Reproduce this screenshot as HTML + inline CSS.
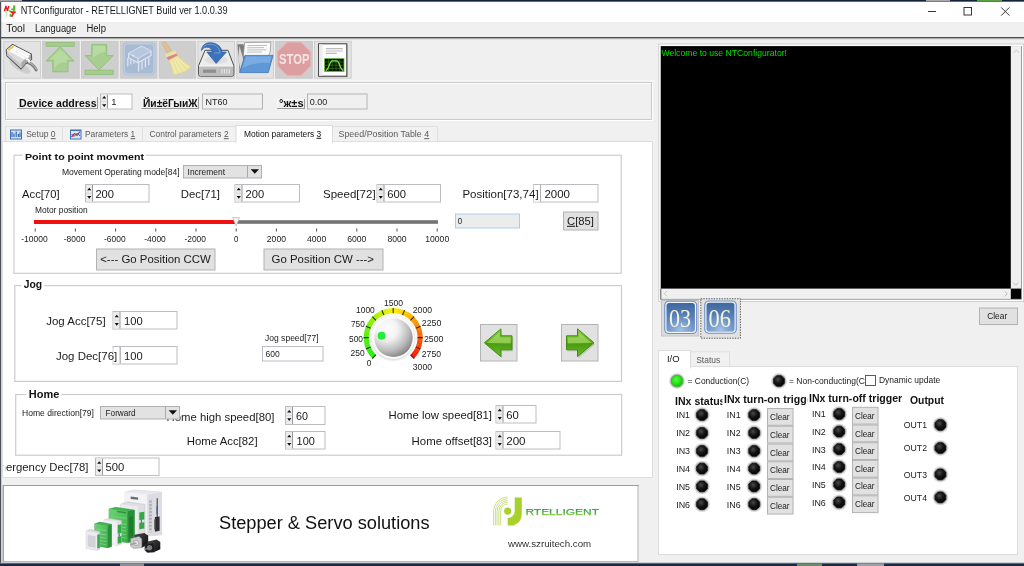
<!DOCTYPE html>
<html lang="en"><head><meta charset="utf-8"><title>NTConfigurator - RETELLIGNET Build ver 1.0.0.39</title>
<style>
html,body{margin:0;padding:0;background:#f0f0f0;overflow:hidden}
body{width:1024px;height:566px;position:relative;font-family:'Liberation Sans', sans-serif}
svg{position:absolute;left:-4px;top:-4px;display:block;filter:blur(0.35px)}
text{font-family:'Liberation Sans', sans-serif;white-space:pre}
</style></head><body>
<svg width="1032" height="574" viewBox="-4 -4 1032 574">
<defs>
<linearGradient id="gBlue" x1="0" y1="0" x2="0" y2="1"><stop offset="0" stop-color="#3f689f"/><stop offset="0.6" stop-color="#5f86bd"/><stop offset="1" stop-color="#6f95c8"/></linearGradient>
<radialGradient id="gBlue2" cx="0.5" cy="0.95" r="0.6"><stop offset="0" stop-color="#a4c4ea" stop-opacity="0.95"/><stop offset="1" stop-color="#86aad8" stop-opacity="0"/></radialGradient>
<radialGradient id="gKnob" cx="0.34" cy="0.28" r="0.9"><stop offset="0" stop-color="#ffffff"/><stop offset="0.3" stop-color="#f3f3f3"/><stop offset="0.62" stop-color="#bcbcbc"/><stop offset="0.85" stop-color="#858585"/><stop offset="1" stop-color="#5c5c5c"/></radialGradient>
<radialGradient id="gLed" cx="0.4" cy="0.35" r="0.7"><stop offset="0" stop-color="#4a4a4a"/><stop offset="0.5" stop-color="#161616"/><stop offset="1" stop-color="#000000"/></radialGradient>
<radialGradient id="gLedG" cx="0.42" cy="0.36" r="0.7"><stop offset="0" stop-color="#5cf548"/><stop offset="0.55" stop-color="#22e812"/><stop offset="1" stop-color="#14b80c"/></radialGradient>
<linearGradient id="gArrow" x1="0" y1="0" x2="0" y2="1"><stop offset="0" stop-color="#8fd04a"/><stop offset="0.5" stop-color="#5fb01c"/><stop offset="0.52" stop-color="#4a9a10"/><stop offset="1" stop-color="#6cbc2a"/></linearGradient>
<clipPath id="cpPage"><rect x="3.2" y="142" width="648.8" height="335"/></clipPath>
<clipPath id="cpIO"><rect x="660" y="367" width="356" height="187"/></clipPath>
<linearGradient id="gW" x1="0" y1="0" x2="1" y2="0"><stop offset="0" stop-color="#f4f4f6"/><stop offset="1" stop-color="#d8d8dc"/></linearGradient>
<linearGradient id="gG" x1="0" y1="0" x2="1" y2="1"><stop offset="0" stop-color="#6ed078"/><stop offset="1" stop-color="#3aae48"/></linearGradient>
<linearGradient id="gRt" x1="0" y1="0" x2="0" y2="1"><stop offset="0" stop-color="#169a52"/><stop offset="0.55" stop-color="#3fae3c"/><stop offset="1" stop-color="#a4d42a"/></linearGradient>
<linearGradient id="gMot" x1="0" y1="0" x2="1" y2="1"><stop offset="0" stop-color="#4a4a4a"/><stop offset="1" stop-color="#0c0c0c"/></linearGradient>
<clipPath id="cpS1"><rect x="660" y="390" width="62.4" height="20"/></clipPath><clipPath id="cpS2"><rect x="722.6" y="390" width="84.6" height="20"/></clipPath></defs>
<rect x="-4" y="-4" width="1032" height="574" fill="#f0f0f0" />
<rect x="-4" y="-4" width="1032" height="6" fill="#7e8796" />
<rect x="-4" y="-4" width="1032" height="5.3" fill="#14233f" />
<rect x="-4" y="-4" width="26" height="5.4" fill="#a8a8a8" />
<rect x="926" y="-4" width="24" height="5.4" fill="#a8a8a8" />
<rect x="977" y="-4" width="25" height="5.4" fill="#5aa040" />
<rect x="1" y="2" width="1027" height="20" fill="#ffffff" />
<rect x="-4" y="2" width="5.2" height="561" fill="#4a4f58" />
<rect x="-4" y="562.6" width="1032" height="1" fill="#9aa0a8" />
<rect x="-4" y="563.4" width="1032" height="6.6" fill="#1a2a44" />
<rect x="120" y="563.4" width="24" height="6.6" fill="#8a8f98" />
<rect x="797" y="563.4" width="25" height="6.6" fill="#6a8a6a" />
<rect x="857" y="563.4" width="27" height="6.6" fill="#9aa0a8" />
<g stroke-linecap="butt" fill="none"><path d="M4.4 11.2 L5.9 6.3 L7.4 10.6 L8.8 6" stroke="#f01818" stroke-width="1.5" stroke-linejoin="round"/><path d="M6.5 11.6 L6.5 16.6" stroke="#bfe3a8" stroke-width="1.3"/><path d="M14.2 5.5 L14.2 10.8" stroke="#52b81e" stroke-width="2.2"/><path d="M11.2 9.4 L14 9.4" stroke="#52b81e" stroke-width="1.7"/><path d="M8.4 10.4 L11.8 12" stroke="#6cc43a" stroke-width="1.6"/><path d="M10.6 12.2 L15.7 12.2" stroke="#f01818" stroke-width="1.9"/><path d="M13.6 12.6 L11.6 16.8" stroke="#f01818" stroke-width="1.8"/><path d="M10.6 14 L10.2 16.6" stroke="#52b81e" stroke-width="1.6"/></g>
<text x="20.7" y="14.2" font-size="10" fill="#1a1a1a" textLength="206.8" lengthAdjust="spacingAndGlyphs">NTConfigurator - RETELLIGNET Build ver 1.0.0.39</text>
<line x1="928" y1="11.5" x2="936" y2="11.5" stroke="#222" stroke-width="0.9"/>
<rect x="964" y="7.5" width="7.5" height="7.5" fill="none" stroke="#222" stroke-width="0.9" />
<path d="M1001.2 7.4 L1009.4 15.6 M1009.4 7.4 L1001.2 15.6" stroke="#222" stroke-width="0.9" fill="none"/>
<text x="6.3" y="32" font-size="10" fill="#1a1a1a" textLength="18.7" lengthAdjust="spacingAndGlyphs">Tool</text>
<text x="35" y="32" font-size="10" fill="#1a1a1a" textLength="41.5" lengthAdjust="spacingAndGlyphs">Language</text>
<text x="86.5" y="32" font-size="10" fill="#1a1a1a" textLength="19.5" lengthAdjust="spacingAndGlyphs">Help</text>
<rect x="1" y="37" width="1027" height="1.6" fill="#4d4d4d" />
<rect x="1" y="38.6" width="1027" height="1" fill="#d8d8d8" />
<rect x="3.7" y="41.3" width="36.7" height="36.9" fill="#e3e3e3" stroke="#c8c8c8" stroke-width="0.8" />
<rect x="42.55" y="41.3" width="36.7" height="36.9" fill="#cecece" stroke="#c6c6c6" stroke-width="0.8" />
<rect x="81.4" y="41.3" width="36.7" height="36.9" fill="#cecece" stroke="#c6c6c6" stroke-width="0.8" />
<rect x="120.25" y="41.3" width="36.7" height="36.9" fill="#cecece" stroke="#c6c6c6" stroke-width="0.8" />
<rect x="159.1" y="41.3" width="36.7" height="36.9" fill="#cecece" stroke="#c6c6c6" stroke-width="0.8" />
<rect x="197.95" y="41.3" width="36.7" height="36.9" fill="#e3e3e3" stroke="#c8c8c8" stroke-width="0.8" />
<rect x="236.8" y="41.3" width="36.7" height="36.9" fill="#e3e3e3" stroke="#c8c8c8" stroke-width="0.8" />
<rect x="275.65" y="41.3" width="36.7" height="36.9" fill="#cecece" stroke="#c6c6c6" stroke-width="0.8" />
<rect x="314.5" y="41.3" width="36.7" height="36.9" fill="#e3e3e3" stroke="#c8c8c8" stroke-width="0.8" />
<g><ellipse cx="20" cy="66.5" rx="12" ry="4.2" fill="#bdbdbd" opacity="0.55" transform="rotate(32 20 66.5)"/><path d="M25.5 62 C30 62.6 34 65.6 36.2 70" stroke="#7e7e7e" stroke-width="3" fill="none" stroke-linecap="round"/><path d="M25.5 61.6 C30 62.2 34 65 36.4 69.4" stroke="#c4c4c4" stroke-width="1" fill="none" stroke-linecap="round"/><path d="M6.2 49.9 L12.6 44.4 L31.3 54.1 L31.7 59.4 L25.3 64 L21.1 69 L6.9 55.9 Z" fill="#dcdcdc" stroke="#565656" stroke-width="1.1" stroke-linejoin="round"/><path d="M6.6 50 L12.7 44.9 L30.9 54.3 L24.6 59.6 Z" fill="#fbfbfb"/><path d="M24.6 59.6 L30.9 54.3 L31.2 59.2 L25 63.8 L21.4 68.2 L21.2 62.8 Z" fill="#a9a9a9"/><path d="M6.8 50.6 L21.2 62.8 L21.2 68.2 L7.3 55.6 Z" fill="#c8c8c8"/><path d="M7.4 51.8 L20.6 63.2" stroke="#efefef" stroke-width="0.9"/><path d="M15.6 51.6 L27.4 58.2 L29.6 56.4 L17.8 50 Z" fill="#ffffff" stroke="#d4d4d4" stroke-width="0.5"/><path d="M26.2 58.6 L29 60.2 L29 62.6" stroke="#ffffff" stroke-width="1.8" fill="none"/><path d="M8.4 50.2 L9.9 49 M10.2 48.8 L11.7 47.6 M12 47.4 L13.5 46.2" stroke="#ffbe1e" stroke-width="1.9"/></g>
<g fill="#a7ce90" stroke="#90c078" stroke-width="0.9" stroke-linejoin="round"><rect x="46" y="42.6" width="28.3" height="3.7"/><path d="M60.1 46.6 L74.1 61 L68 61 L68 71.8 L52.8 71.8 L52.8 61 L46 61 Z"/></g>
<path d="M60.1 49 L70.5 59.6 L66.6 59.6 L66.6 63 C60 61 56 64 54.2 70.4 L54.2 59.6 L49.6 59.6 Z" fill="#bcdda6" opacity="0.75"/>
<g fill="#a7ce90" stroke="#90c078" stroke-width="0.9" stroke-linejoin="round"><rect x="85" y="70.2" width="28.2" height="4.3"/><path d="M91.7 44.4 L106.7 44.4 L106.7 55.6 L113.1 55.6 L99.1 70 L85 55.6 L91.7 55.6 Z"/></g>
<path d="M93 45.8 L105.4 45.8 L105.4 52 C100 52.5 95.4 55 93 59 Z" fill="#bcdda6" opacity="0.75"/>
<rect x="122.8" y="42.5" width="32.5" height="32.8" rx="4.2" fill="#a9bbd4"/><rect x="124.1" y="43.8" width="29.9" height="30.2" rx="3.3" fill="none" stroke="#c9d6e8" stroke-width="1"/><g stroke="#dfe7f2" stroke-width="1.2" fill="none" stroke-linejoin="round"><path d="M128.6 53.4 L141.6 46.2 L151 51 L151 55.4 L138 62.8 L128.6 58 Z"/><path d="M128.6 53.4 L138 58.2 L151 51 M138 58.2 L138 62.8"/><path d="M127.8 58 L127.8 66.4 M130.8 59.6 L130.8 64.6 M134 61.2 L134 63.6 M138.6 63 L138.6 71.6 M142 61 L142 69.4 M145.4 59.2 L145.4 67.2 M148.8 57.2 L148.8 65"/></g><path d="M128.6 53.4 L141.6 46.2 L151 51 L138 58.2 Z" fill="#bccbe0" opacity="0.8"/><circle cx="133.4" cy="55.6" r="0.9" fill="#e6edf6"/>
<g><path d="M161.9 43 Q162.6 41.6 165.6 42 L171.4 50.4 L166.8 52.6 Z" fill="#dfc094" stroke="#cfae82" stroke-width="0.6"/><path d="M168.4 60 L177.4 55.4 C181 60 187 64 191.2 66.5 C188 71 181 74 173.2 74.8 C172.4 69 170.4 64 168.4 60 Z" fill="#ebe29e" stroke="#dcd28a" stroke-width="0.6"/><path d="M171.2 61 L176.4 73.8 M173.6 59.8 L180.6 72.6 M175.8 58.8 L184.8 70.4 M177 57.6 L188.4 68" stroke="#f5efbe" stroke-width="0.9" fill="none"/><path d="M164.7 54.5 L175 50.2 L176.7 53.4 L166.8 57.3 Z" fill="#ebe29e"/><path d="M166.8 57.3 L176.7 53.4 L177.5 55.6 L168.2 60.2 Z" fill="#de8686"/></g>
<g><path d="M205 50.3 L228 50.3 L233.8 65.6 L233.8 74.4 Q233.8 76.2 232 76.2 L200.4 76.2 Q198.6 76.2 198.6 74.4 L198.6 65.6 Z" fill="#ececec" stroke="#4c4c4c" stroke-width="1" stroke-linejoin="round"/><path d="M199.2 66 L233.2 66 L233.2 74.2 Q233.2 75.6 231.8 75.6 L200.6 75.6 Q199.2 75.6 199.2 74.2 Z" fill="#bdbdbd"/><path d="M199.2 66 L233.2 66" stroke="#f8f8f8" stroke-width="1"/><rect x="203" y="69.6" width="13" height="3.2" fill="#8e8e8e"/><path d="M222 69 L222 73.6 M224.4 69 L224.4 73.6 M226.8 69 L226.8 73.6 M229.2 69 L229.2 73.6" stroke="#e6e6e6" stroke-width="1"/><ellipse cx="216.2" cy="60" rx="11.5" ry="3.8" fill="#dedede"/><path d="M201.4 50.6 C201.6 44.6 207 42 212 42.8 C218.4 43.8 221.6 47.6 221.8 52 L226.4 52 L216.2 63.4 L206.8 52 L212.2 52 C212 48.8 209.6 47 206.6 47.2 C204 47.4 202.4 48.8 201.4 50.6 Z" fill="#3c73bd" stroke="#2c5c9e" stroke-width="0.7" stroke-linejoin="round"/><path d="M203 47.6 C205 44.6 209.6 43.6 213.4 44.6 C216.6 45.6 219.4 48 220 52.8 L214 53" fill="none" stroke="#7fa8de" stroke-width="1" opacity="0.8"/></g>
<g><path d="M237.4 44.2 L243.4 44.2 L244.4 46 L246 72 L239.6 72 Z" fill="#7c7c7c"/><path d="M239.4 46 L243.6 60 L240.6 71 L238.2 58 Z" fill="#d9d9d9"/><path d="M244.6 42.6 L270.8 42.2 L270.2 52 L268.4 56.4 L243.4 56.4 Z" fill="#fbfbfb" stroke="#8a8a8a" stroke-width="0.7"/><path d="M247.6 45.6 L267 45.4 M247.4 47.8 L264 47.6 M247.2 50 L266.4 49.8 M247 52.2 L262 52" stroke="#b5b5b5" stroke-width="0.9"/><path d="M244.9 55.4 L273 55.4 L268.3 72.6 L239.6 72.6 Z" fill="#5e98d8" stroke="#3f74b6" stroke-width="0.8" stroke-linejoin="round"/><path d="M245.8 56.6 L271.4 56.6 L269.6 63 C260 62 250 64 242.4 68 Z" fill="#86b4e6" opacity="0.7"/></g>
<polygon points="311.01,65.90 301.10,75.81 287.10,75.81 277.19,65.90 277.19,51.90 287.10,41.99 301.10,41.99 311.01,51.90" fill="#dc9ea0" stroke="#e6baba" stroke-width="1.2"/>
<text x="279" y="64.4" font-size="15.4" font-weight="bold" fill="#f3e4e4" textLength="30.4" lengthAdjust="spacingAndGlyphs">STOP</text>
<g><rect x="319.6" y="44.8" width="28.2" height="32.4" fill="#bcbcbc"/><rect x="318.6" y="43.8" width="28.2" height="32.4" fill="#fdfdfd" stroke="#3c3c3c" stroke-width="1"/><rect x="319.2" y="44.4" width="3.4" height="31.2" fill="#ececec"/><path d="M325.8 48.6 L342.8 48.6 M325.8 51 L342.8 51 M325.8 53.4 L336.8 53.4" stroke="#bdbdbd" stroke-width="1.1"/><rect x="324.6" y="58.6" width="19.4" height="12.8" fill="#060c02" stroke="#6ab83a" stroke-width="0.8"/><path d="M324.6 62 L344 62 M324.6 65.2 L344 65.2 M324.6 68.4 L344 68.4 M328.4 58.6 L328.4 71.4 M332.2 58.6 L332.2 71.4 M336 58.6 L336 71.4 M339.8 58.6 L339.8 71.4" stroke="#2f8212" stroke-width="0.7"/><path d="M325.6 70.4 C329 70 329.6 61 332 60.8 L337 60.8 C339.4 61 340 70 343.4 70.4" stroke="#8be04c" stroke-width="1.2" fill="none"/></g>
<rect x="1" y="80.4" width="654" height="1" fill="#fbfbfb" />
<rect x="6.5" y="83.5" width="646" height="37" fill="none" stroke="#ffffff" stroke-width="1" />
<rect x="5.5" y="82.5" width="646" height="37" fill="none" stroke="#c9c9c9" stroke-width="1" />
<rect x="17" y="97" width="81" height="12" fill="#f0f0f0" />
<line x1="17" y1="97.5" x2="98" y2="97.5" stroke="#fafafa" stroke-width="1"/>
<line x1="17.5" y1="97" x2="17.5" y2="109" stroke="#fafafa" stroke-width="1"/>
<line x1="17" y1="108.5" x2="98" y2="108.5" stroke="#9c9c9c" stroke-width="1"/>
<line x1="97.5" y1="97" x2="97.5" y2="109" stroke="#9c9c9c" stroke-width="1"/>
<text x="19" y="107" font-size="10.2" font-weight="bold" fill="#111" textLength="77.6" lengthAdjust="spacingAndGlyphs">Device address</text>
<rect x="100.5" y="94" width="31.5" height="15" fill="#ffffff" stroke="#bcbdc2" stroke-width="1" />
<rect x="101" y="94.5" width="6.5" height="14" fill="#ececec" />
<line x1="101" y1="101.5" x2="107.5" y2="101.5" stroke="#d6d6d6" stroke-width="0.8"/>
<path d="M102.15 98.4 L104.25 95.9 L106.35 98.4 Z M102.15 104.3 L104.25 106.9 L106.35 104.3 Z" fill="#111"/>
<line x1="107.5" y1="94.5" x2="107.5" y2="108.5" stroke="#9a9a9a" stroke-width="1"/>
<text x="111.2" y="105.465" font-size="9.4" fill="#1a1a1a">1</text>
<rect x="141.5" y="97" width="57.5" height="12" fill="#f0f0f0" />
<line x1="141.5" y1="97.5" x2="199" y2="97.5" stroke="#fafafa" stroke-width="1"/>
<line x1="142" y1="97" x2="142" y2="109" stroke="#fafafa" stroke-width="1"/>
<line x1="141.5" y1="108.5" x2="199" y2="108.5" stroke="#9c9c9c" stroke-width="1"/>
<line x1="198.5" y1="97" x2="198.5" y2="109" stroke="#9c9c9c" stroke-width="1"/>
<text x="143" y="107" font-size="10.2" font-weight="bold" fill="#111" textLength="54.6" lengthAdjust="spacingAndGlyphs">Йи±ёГыиЖ</text>
<rect x="202.5" y="94" width="60" height="15" fill="#f0f0f0" stroke="#b4b4b4" stroke-width="1" />
<text x="205.6" y="105.065" font-size="9.4" fill="#1c1c1c" textLength="22" lengthAdjust="spacingAndGlyphs">NT60</text>
<rect x="277" y="99" width="28" height="10" fill="#f0f0f0" />
<line x1="277" y1="99.5" x2="305" y2="99.5" stroke="#fafafa" stroke-width="1"/>
<line x1="277.5" y1="99" x2="277.5" y2="109" stroke="#fafafa" stroke-width="1"/>
<line x1="277" y1="108.5" x2="305" y2="108.5" stroke="#9c9c9c" stroke-width="1"/>
<line x1="304.5" y1="99" x2="304.5" y2="109" stroke="#9c9c9c" stroke-width="1"/>
<text x="279" y="107.4" font-size="10.2" font-weight="bold" fill="#111" textLength="24.6" lengthAdjust="spacingAndGlyphs">°ж±s</text>
<rect x="307.5" y="94" width="59.5" height="15" fill="#f0f0f0" stroke="#b4b4b4" stroke-width="1" />
<text x="309.8" y="105.065" font-size="9.4" fill="#1c1c1c" textLength="17.6" lengthAdjust="spacingAndGlyphs">0.00</text>
<rect x="2.6" y="141.5" width="649.9" height="336" fill="#ffffff" stroke="#dedede" stroke-width="1" />
<rect x="5.5" y="126.5" width="57" height="15" fill="#f1f1f1" stroke="#dfdfdf" stroke-width="1" />
<rect x="62.5" y="126.5" width="80" height="15" fill="#f1f1f1" stroke="#dfdfdf" stroke-width="1" />
<rect x="142.5" y="126.5" width="94" height="15" fill="#f1f1f1" stroke="#dfdfdf" stroke-width="1" />
<rect x="332.5" y="126.5" width="105" height="15" fill="#f1f1f1" stroke="#dfdfdf" stroke-width="1" />
<rect x="236" y="125.5" width="96.5" height="17" fill="#ffffff" stroke="#dcdcdc" stroke-width="1" />
<rect x="236.5" y="141" width="95.5" height="2" fill="#ffffff" />
<rect x="10" y="129.5" width="12" height="10" fill="#3f72b8" />
<rect x="11" y="130.5" width="10" height="8" fill="#cfe0f4" />
<path d="M12 137 L12 132 M14 137 L14 133.5 M16.2 137 L16.2 131.5 M18.4 137 L18.4 134 M20 137 L20 132.5" stroke="#2d5fa8" stroke-width="1.1"/>
<rect x="70" y="129.5" width="11.5" height="10" fill="#3f72b8" />
<rect x="71" y="131" width="9.5" height="7.5" fill="#dbe7f5" />
<path d="M71.5 137 L74.5 133.5 L77 135.5 L80 131.5" stroke="#d0322c" stroke-width="1.2" fill="none"/>
<path d="M71.5 134 L74 136.5 L77.5 133 L80 136" stroke="#2d5fa8" stroke-width="1" fill="none"/>
<text x="26.2" y="137.2" font-size="9.6" fill="#5a5a5a" textLength="29.4" lengthAdjust="spacingAndGlyphs">Setup <tspan text-decoration="underline">0</tspan></text>
<text x="85" y="137.2" font-size="9.6" fill="#5a5a5a" textLength="50.2" lengthAdjust="spacingAndGlyphs">Parameters <tspan text-decoration="underline">1</tspan></text>
<text x="149.5" y="137.2" font-size="9.6" fill="#5a5a5a" textLength="79.1" lengthAdjust="spacingAndGlyphs">Control parameters <tspan text-decoration="underline">2</tspan></text>
<text x="244" y="136.8" font-size="9.6" fill="#111" textLength="77.2" lengthAdjust="spacingAndGlyphs">Motion parameters <tspan text-decoration="underline">3</tspan></text>
<text x="338.5" y="137.2" font-size="9.6" fill="#5a5a5a" textLength="90.7" lengthAdjust="spacingAndGlyphs">Speed/Position Table <tspan text-decoration="underline">4</tspan></text>
<g clip-path="url(#cpPage)">
<rect x="14" y="155.2" width="607.2" height="118.1" fill="none" stroke="#cbcbcb" stroke-width="1.15" />
<rect x="22.5" y="153.2" width="123.5" height="5" fill="#ffffff" />
<text x="25" y="159.6" font-size="9.8" font-weight="bold" fill="#111" textLength="119" lengthAdjust="spacingAndGlyphs">Point to point movment</text>
<rect x="14.8" y="285.6" width="606.7" height="95.8" fill="none" stroke="#cbcbcb" stroke-width="1.15" />
<rect x="21.3" y="283.6" width="22.9" height="5" fill="#ffffff" />
<text x="23.8" y="288.2" font-size="10.2" font-weight="bold" fill="#111" textLength="18.4" lengthAdjust="spacingAndGlyphs">Jog</text>
<rect x="15.7" y="394.5" width="606" height="60.7" fill="none" stroke="#cbcbcb" stroke-width="1.15" />
<rect x="26.3" y="392.5" width="35" height="5" fill="#ffffff" />
<text x="28.8" y="397.7" font-size="10.2" font-weight="bold" fill="#111" textLength="30.5" lengthAdjust="spacingAndGlyphs">Home</text>
<text x="62" y="175" font-size="9.3" fill="#1a1a1a" textLength="117.6" lengthAdjust="spacingAndGlyphs">Movement Operating mode[84]</text>
<rect x="183.5" y="165.5" width="78" height="12.5" fill="#e2e2e2" stroke="#b0b0b0" stroke-width="1" />
<line x1="247.5" y1="166" x2="247.5" y2="177.5" stroke="#a8a8a8" stroke-width="1"/>
<path d="M250.6 169.25 L259 169.25 L254.8 173.85 Z" fill="#111"/>
<text x="187.6" y="175.25" font-size="9.3" fill="#1a1a1a" textLength="37.4" lengthAdjust="spacingAndGlyphs">Increment</text>
<text x="22" y="197.6" font-size="10.4" fill="#1a1a1a" textLength="37.6" lengthAdjust="spacingAndGlyphs">Acc[70]</text>
<rect x="85.5" y="184.5" width="63.5" height="17.5" fill="#ffffff" stroke="#bcbdc2" stroke-width="1" />
<rect x="86" y="185" width="6.5" height="16.5" fill="#ececec" />
<line x1="86" y1="193.25" x2="92.5" y2="193.25" stroke="#d6d6d6" stroke-width="0.8"/>
<path d="M87.15 190.15 L89.25 187.65 L91.35 190.15 Z M87.15 196.05 L89.25 198.65 L91.35 196.05 Z" fill="#111"/>
<line x1="92.5" y1="185" x2="92.5" y2="201.5" stroke="#9a9a9a" stroke-width="1"/>
<text x="95.4" y="197.502" font-size="10.2" fill="#1a1a1a" textLength="18.6" lengthAdjust="spacingAndGlyphs">200</text>
<text x="180.8" y="197.6" font-size="10.4" fill="#1a1a1a" textLength="39.2" lengthAdjust="spacingAndGlyphs">Dec[71]</text>
<rect x="235" y="184.5" width="64.5" height="17.5" fill="#ffffff" stroke="#bcbdc2" stroke-width="1" />
<rect x="235.5" y="185" width="6.5" height="16.5" fill="#ececec" />
<line x1="235.5" y1="193.25" x2="242" y2="193.25" stroke="#d6d6d6" stroke-width="0.8"/>
<path d="M236.65 190.15 L238.75 187.65 L240.85 190.15 Z M236.65 196.05 L238.75 198.65 L240.85 196.05 Z" fill="#111"/>
<line x1="242" y1="185" x2="242" y2="201.5" stroke="#9a9a9a" stroke-width="1"/>
<text x="245.6" y="197.502" font-size="10.2" fill="#1a1a1a" textLength="18.6" lengthAdjust="spacingAndGlyphs">200</text>
<text x="323" y="197.6" font-size="10.4" fill="#1a1a1a" textLength="52.6" lengthAdjust="spacingAndGlyphs">Speed[72]</text>
<rect x="377" y="184.5" width="63.5" height="17.5" fill="#ffffff" stroke="#bcbdc2" stroke-width="1" />
<rect x="377.5" y="185" width="6.5" height="16.5" fill="#ececec" />
<line x1="377.5" y1="193.25" x2="384" y2="193.25" stroke="#d6d6d6" stroke-width="0.8"/>
<path d="M378.65 190.15 L380.75 187.65 L382.85 190.15 Z M378.65 196.05 L380.75 198.65 L382.85 196.05 Z" fill="#111"/>
<line x1="384" y1="185" x2="384" y2="201.5" stroke="#9a9a9a" stroke-width="1"/>
<text x="387.2" y="197.502" font-size="10.2" fill="#1a1a1a" textLength="18.8" lengthAdjust="spacingAndGlyphs">600</text>
<rect x="533.5" y="184.5" width="64.5" height="17.5" fill="#ffffff" stroke="#bcbdc2" stroke-width="1" />
<line x1="540.5" y1="185" x2="540.5" y2="201.5" stroke="#9a9a9a" stroke-width="1"/>
<text x="544.4" y="197.502" font-size="10.2" fill="#1a1a1a" textLength="25.6" lengthAdjust="spacingAndGlyphs">2000</text>
<rect x="531" y="186" width="9" height="15.5" fill="#ffffff" />
<line x1="540.5" y1="185" x2="540.5" y2="201.5" stroke="#b0b0b0" stroke-width="1"/>
<line x1="533.5" y1="185" x2="533.5" y2="201.5" stroke="#d0d0d8" stroke-width="1"/>
<text x="462.4" y="197.6" font-size="10.4" fill="#1a1a1a" textLength="76.2" lengthAdjust="spacingAndGlyphs">Position[73,74]</text>
<text x="35" y="212.8" font-size="9.5" fill="#1a1a1a" textLength="52.6" lengthAdjust="spacingAndGlyphs">Motor position</text>
<rect x="34" y="220" width="202" height="4" fill="#f01010" />
<rect x="236" y="220.2" width="202" height="3.6" fill="#747474" />
<path d="M232.6 217.6 L239.6 217.6 L236.1 226 Z" fill="#f4f4f4" stroke="#b8b8b8" stroke-width="0.7"/>
<line x1="35.2" y1="228.4" x2="35.2" y2="231.6" stroke="#444" stroke-width="0.9"/>
<text x="21.15" y="241.5" font-size="9.8" fill="#1a1a1a" textLength="26.5" lengthAdjust="spacingAndGlyphs">-10000</text>
<line x1="75.4" y1="228.4" x2="75.4" y2="231.6" stroke="#444" stroke-width="0.9"/>
<text x="63.8" y="241.5" font-size="9.8" fill="#1a1a1a" textLength="21.6" lengthAdjust="spacingAndGlyphs">-8000</text>
<line x1="115.6" y1="228.4" x2="115.6" y2="231.6" stroke="#444" stroke-width="0.9"/>
<text x="104" y="241.5" font-size="9.8" fill="#1a1a1a" textLength="21.6" lengthAdjust="spacingAndGlyphs">-6000</text>
<line x1="155.8" y1="228.4" x2="155.8" y2="231.6" stroke="#444" stroke-width="0.9"/>
<text x="144.2" y="241.5" font-size="9.8" fill="#1a1a1a" textLength="21.6" lengthAdjust="spacingAndGlyphs">-4000</text>
<line x1="196" y1="228.4" x2="196" y2="231.6" stroke="#444" stroke-width="0.9"/>
<text x="184.4" y="241.5" font-size="9.8" fill="#1a1a1a" textLength="21.6" lengthAdjust="spacingAndGlyphs">-2000</text>
<line x1="236.2" y1="228.4" x2="236.2" y2="231.6" stroke="#444" stroke-width="0.9"/>
<text x="234" y="241.5" font-size="9.8" fill="#1a1a1a" textLength="4.4" lengthAdjust="spacingAndGlyphs">0</text>
<line x1="276.4" y1="228.4" x2="276.4" y2="231.6" stroke="#444" stroke-width="0.9"/>
<text x="266.8" y="241.5" font-size="9.8" fill="#1a1a1a" textLength="19.2" lengthAdjust="spacingAndGlyphs">2000</text>
<line x1="316.6" y1="228.4" x2="316.6" y2="231.6" stroke="#444" stroke-width="0.9"/>
<text x="307" y="241.5" font-size="9.8" fill="#1a1a1a" textLength="19.2" lengthAdjust="spacingAndGlyphs">4000</text>
<line x1="356.8" y1="228.4" x2="356.8" y2="231.6" stroke="#444" stroke-width="0.9"/>
<text x="347.2" y="241.5" font-size="9.8" fill="#1a1a1a" textLength="19.2" lengthAdjust="spacingAndGlyphs">6000</text>
<line x1="397" y1="228.4" x2="397" y2="231.6" stroke="#444" stroke-width="0.9"/>
<text x="387.4" y="241.5" font-size="9.8" fill="#1a1a1a" textLength="19.2" lengthAdjust="spacingAndGlyphs">8000</text>
<line x1="437.2" y1="228.4" x2="437.2" y2="231.6" stroke="#444" stroke-width="0.9"/>
<text x="425.2" y="241.5" font-size="9.8" fill="#1a1a1a" textLength="24" lengthAdjust="spacingAndGlyphs">10000</text>
<rect x="455.5" y="214" width="64" height="14" fill="#ececec" stroke="#a9cdf0" stroke-width="1" />
<text x="458.6" y="224.565" font-size="9.4" fill="#1c1c1c"></text>
<text x="457.8" y="224" font-size="9.4" fill="#1a1a1a" textLength="4.4" lengthAdjust="spacingAndGlyphs">0</text>
<rect x="563.5" y="212" width="34.5" height="18" fill="#e1e1e1" stroke="#b2b2b2" stroke-width="1" />
<text x="567" y="224.8" font-size="10.2" fill="#1c1c1c" textLength="27" lengthAdjust="spacingAndGlyphs"><tspan text-decoration="underline">C</tspan>[85]</text>
<rect x="96.5" y="249" width="118.5" height="21" fill="#e1e1e1" stroke="#b2b2b2" stroke-width="1" />
<text x="100.2" y="263" font-size="10.6" fill="#1a1a1a" textLength="110.6" lengthAdjust="spacingAndGlyphs">&lt;--- Go Position CCW</text>
<rect x="264" y="249" width="119" height="21" fill="#e1e1e1" stroke="#b2b2b2" stroke-width="1" />
<text x="271.6" y="263" font-size="10.6" fill="#1a1a1a" textLength="102.4" lengthAdjust="spacingAndGlyphs">Go Position CW ---&gt;</text>
<text x="46.2" y="324.8" font-size="10.4" fill="#1a1a1a" textLength="59.4" lengthAdjust="spacingAndGlyphs">Jog Acc[75]</text>
<rect x="113" y="311.5" width="64" height="17.5" fill="#ffffff" stroke="#bcbdc2" stroke-width="1" />
<rect x="113.5" y="312" width="6.5" height="16.5" fill="#ececec" />
<line x1="113.5" y1="320.25" x2="120" y2="320.25" stroke="#d6d6d6" stroke-width="0.8"/>
<path d="M114.65 317.15 L116.75 314.65 L118.85 317.15 Z M114.65 323.05 L116.75 325.65 L118.85 323.05 Z" fill="#111"/>
<line x1="120" y1="312" x2="120" y2="328.5" stroke="#9a9a9a" stroke-width="1"/>
<text x="124" y="324.502" font-size="10.2" fill="#1a1a1a" textLength="18.6" lengthAdjust="spacingAndGlyphs">100</text>
<rect x="113" y="346.5" width="64" height="17.5" fill="#ffffff" stroke="#bcbdc2" stroke-width="1" />
<line x1="120" y1="347" x2="120" y2="363.5" stroke="#9a9a9a" stroke-width="1"/>
<text x="124" y="359.502" font-size="10.2" fill="#1a1a1a" textLength="18.6" lengthAdjust="spacingAndGlyphs">100</text>
<rect x="111" y="347.5" width="8.6" height="15.9" fill="#ffffff" />
<line x1="120.2" y1="347" x2="120.2" y2="363.6" stroke="#b0b0b0" stroke-width="1"/>
<line x1="113" y1="347" x2="113" y2="363.6" stroke="#d4d4dc" stroke-width="1"/>
<text x="56" y="359.8" font-size="10.4" fill="#1a1a1a" textLength="61.2" lengthAdjust="spacingAndGlyphs">Jog Dec[76]</text>
<text x="265" y="341" font-size="9.3" fill="#1a1a1a" textLength="53.6" lengthAdjust="spacingAndGlyphs">Jog speed[77]</text>
<rect x="262.5" y="346.5" width="60.5" height="14.5" fill="#ffffff" stroke="#b9bcc6" stroke-width="1" />
<text x="265.6" y="357.315" font-size="9.4" fill="#1c1c1c" textLength="14.2" lengthAdjust="spacingAndGlyphs">600</text>
<path d="M374.18 356.62 A26.9 26.9 0 0 1 372.41 354.67" stroke="rgb(35,240,16)" stroke-width="5.1" fill="none"/>
<path d="M372.59 354.89 A26.9 26.9 0 0 1 371.00 352.80" stroke="rgb(41,240,15)" stroke-width="5.1" fill="none"/>
<path d="M371.16 353.03 A26.9 26.9 0 0 1 369.76 350.81" stroke="rgb(46,240,15)" stroke-width="5.1" fill="none"/>
<path d="M369.90 351.05 A26.9 26.9 0 0 1 368.70 348.71" stroke="rgb(52,240,14)" stroke-width="5.1" fill="none"/>
<path d="M368.82 348.97 A26.9 26.9 0 0 1 367.83 346.54" stroke="rgb(58,240,14)" stroke-width="5.1" fill="none"/>
<path d="M367.92 346.80 A26.9 26.9 0 0 1 367.15 344.29" stroke="rgb(64,240,14)" stroke-width="5.1" fill="none"/>
<path d="M367.22 344.56 A26.9 26.9 0 0 1 366.66 341.99" stroke="rgb(70,240,13)" stroke-width="5.1" fill="none"/>
<path d="M366.71 342.27 A26.9 26.9 0 0 1 366.38 339.66" stroke="rgb(75,240,13)" stroke-width="5.1" fill="none"/>
<path d="M366.40 339.94 A26.9 26.9 0 0 1 366.30 337.32" stroke="rgb(81,240,12)" stroke-width="5.1" fill="none"/>
<path d="M366.30 337.60 A26.9 26.9 0 0 1 366.43 334.98" stroke="rgb(87,240,12)" stroke-width="5.1" fill="none"/>
<path d="M366.40 335.26 A26.9 26.9 0 0 1 366.76 332.65" stroke="rgb(93,240,11)" stroke-width="5.1" fill="none"/>
<path d="M366.71 332.93 A26.9 26.9 0 0 1 367.29 330.37" stroke="rgb(98,240,11)" stroke-width="5.1" fill="none"/>
<path d="M367.22 330.64 A26.9 26.9 0 0 1 368.02 328.14" stroke="rgb(104,240,10)" stroke-width="5.1" fill="none"/>
<path d="M367.92 328.40 A26.9 26.9 0 0 1 368.94 325.98" stroke="rgb(110,240,10)" stroke-width="5.1" fill="none"/>
<path d="M368.82 326.23 A26.9 26.9 0 0 1 370.05 323.91" stroke="rgb(120,241,9)" stroke-width="5.1" fill="none"/>
<path d="M369.90 324.15 A26.9 26.9 0 0 1 371.33 321.94" stroke="rgb(130,241,8)" stroke-width="5.1" fill="none"/>
<path d="M371.16 322.17 A26.9 26.9 0 0 1 372.78 320.09" stroke="rgb(139,242,7)" stroke-width="5.1" fill="none"/>
<path d="M372.59 320.31 A26.9 26.9 0 0 1 374.38 318.38" stroke="rgb(149,242,6)" stroke-width="5.1" fill="none"/>
<path d="M374.18 318.58 A26.9 26.9 0 0 1 376.13 316.81" stroke="rgb(159,243,5)" stroke-width="5.1" fill="none"/>
<path d="M375.91 316.99 A26.9 26.9 0 0 1 378.00 315.40" stroke="rgb(169,243,3)" stroke-width="5.1" fill="none"/>
<path d="M377.77 315.56 A26.9 26.9 0 0 1 379.99 314.16" stroke="rgb(179,244,2)" stroke-width="5.1" fill="none"/>
<path d="M379.75 314.30 A26.9 26.9 0 0 1 382.09 313.10" stroke="rgb(188,244,1)" stroke-width="5.1" fill="none"/>
<path d="M381.83 313.22 A26.9 26.9 0 0 1 384.26 312.23" stroke="rgb(198,245,0)" stroke-width="5.1" fill="none"/>
<path d="M384.00 312.32 A26.9 26.9 0 0 1 386.51 311.55" stroke="rgb(209,244,0)" stroke-width="5.1" fill="none"/>
<path d="M386.24 311.62 A26.9 26.9 0 0 1 388.81 311.06" stroke="rgb(221,243,0)" stroke-width="5.1" fill="none"/>
<path d="M388.53 311.11 A26.9 26.9 0 0 1 391.14 310.78" stroke="rgb(233,242,0)" stroke-width="5.1" fill="none"/>
<path d="M390.86 310.80 A26.9 26.9 0 0 1 393.48 310.70" stroke="rgb(244,241,0)" stroke-width="5.1" fill="none"/>
<path d="M393.20 310.70 A26.9 26.9 0 0 1 395.82 310.83" stroke="rgb(250,236,0)" stroke-width="5.1" fill="none"/>
<path d="M395.54 310.80 A26.9 26.9 0 0 1 398.15 311.16" stroke="rgb(251,228,0)" stroke-width="5.1" fill="none"/>
<path d="M397.87 311.11 A26.9 26.9 0 0 1 400.43 311.69" stroke="rgb(252,221,0)" stroke-width="5.1" fill="none"/>
<path d="M400.16 311.62 A26.9 26.9 0 0 1 402.66 312.42" stroke="rgb(253,213,0)" stroke-width="5.1" fill="none"/>
<path d="M402.40 312.32 A26.9 26.9 0 0 1 404.82 313.34" stroke="rgb(253,205,0)" stroke-width="5.1" fill="none"/>
<path d="M404.57 313.22 A26.9 26.9 0 0 1 406.89 314.45" stroke="rgb(254,198,0)" stroke-width="5.1" fill="none"/>
<path d="M406.65 314.30 A26.9 26.9 0 0 1 408.86 315.73" stroke="rgb(255,190,0)" stroke-width="5.1" fill="none"/>
<path d="M408.63 315.56 A26.9 26.9 0 0 1 410.71 317.18" stroke="rgb(255,181,0)" stroke-width="5.1" fill="none"/>
<path d="M410.49 316.99 A26.9 26.9 0 0 1 412.42 318.78" stroke="rgb(255,173,0)" stroke-width="5.1" fill="none"/>
<path d="M412.22 318.58 A26.9 26.9 0 0 1 413.99 320.53" stroke="rgb(255,164,0)" stroke-width="5.1" fill="none"/>
<path d="M413.81 320.31 A26.9 26.9 0 0 1 415.40 322.40" stroke="rgb(255,156,0)" stroke-width="5.1" fill="none"/>
<path d="M415.24 322.17 A26.9 26.9 0 0 1 416.64 324.39" stroke="rgb(255,147,0)" stroke-width="5.1" fill="none"/>
<path d="M416.50 324.15 A26.9 26.9 0 0 1 417.70 326.49" stroke="rgb(255,139,0)" stroke-width="5.1" fill="none"/>
<path d="M417.58 326.23 A26.9 26.9 0 0 1 418.57 328.66" stroke="rgb(255,130,0)" stroke-width="5.1" fill="none"/>
<path d="M418.48 328.40 A26.9 26.9 0 0 1 419.25 330.91" stroke="rgb(255,121,0)" stroke-width="5.1" fill="none"/>
<path d="M419.18 330.64 A26.9 26.9 0 0 1 419.74 333.21" stroke="rgb(255,113,0)" stroke-width="5.1" fill="none"/>
<path d="M419.69 332.93 A26.9 26.9 0 0 1 420.02 335.54" stroke="rgb(255,104,0)" stroke-width="5.1" fill="none"/>
<path d="M420.00 335.26 A26.9 26.9 0 0 1 420.10 337.88" stroke="rgb(255,96,0)" stroke-width="5.1" fill="none"/>
<path d="M420.10 337.60 A26.9 26.9 0 0 1 419.97 340.22" stroke="rgb(255,87,0)" stroke-width="5.1" fill="none"/>
<path d="M420.00 339.94 A26.9 26.9 0 0 1 419.64 342.55" stroke="rgb(255,79,0)" stroke-width="5.1" fill="none"/>
<path d="M419.69 342.27 A26.9 26.9 0 0 1 419.11 344.83" stroke="rgb(255,70,0)" stroke-width="5.1" fill="none"/>
<path d="M419.18 344.56 A26.9 26.9 0 0 1 418.38 347.06" stroke="rgb(254,62,1)" stroke-width="5.1" fill="none"/>
<path d="M418.48 346.80 A26.9 26.9 0 0 1 417.46 349.22" stroke="rgb(253,54,2)" stroke-width="5.1" fill="none"/>
<path d="M417.58 348.97 A26.9 26.9 0 0 1 416.35 351.29" stroke="rgb(253,45,4)" stroke-width="5.1" fill="none"/>
<path d="M416.50 351.05 A26.9 26.9 0 0 1 415.07 353.26" stroke="rgb(252,37,5)" stroke-width="5.1" fill="none"/>
<path d="M415.24 353.03 A26.9 26.9 0 0 1 413.62 355.11" stroke="rgb(251,29,6)" stroke-width="5.1" fill="none"/>
<path d="M413.81 354.89 A26.9 26.9 0 0 1 412.22 356.62" stroke="rgb(250,20,7)" stroke-width="5.1" fill="none"/>
<line x1="375.95" y1="354.85" x2="372.27" y2="358.53" stroke="#2a2a1a" stroke-width="1.1"/>
<line x1="370.66" y1="346.94" x2="365.85" y2="348.93" stroke="#2a2a1a" stroke-width="1.1"/>
<line x1="368.8" y1="337.6" x2="363.6" y2="337.6" stroke="#2a2a1a" stroke-width="1.1"/>
<line x1="370.66" y1="328.26" x2="365.85" y2="326.27" stroke="#2a2a1a" stroke-width="1.1"/>
<line x1="375.95" y1="320.35" x2="372.27" y2="316.67" stroke="#2a2a1a" stroke-width="1.1"/>
<line x1="383.86" y1="315.06" x2="381.87" y2="310.25" stroke="#2a2a1a" stroke-width="1.1"/>
<line x1="393.2" y1="313.2" x2="393.2" y2="308" stroke="#2a2a1a" stroke-width="1.1"/>
<line x1="402.54" y1="315.06" x2="404.53" y2="310.25" stroke="#2a2a1a" stroke-width="1.1"/>
<line x1="410.45" y1="320.35" x2="414.13" y2="316.67" stroke="#2a2a1a" stroke-width="1.1"/>
<line x1="415.74" y1="328.26" x2="420.55" y2="326.27" stroke="#2a2a1a" stroke-width="1.1"/>
<line x1="417.6" y1="337.6" x2="422.8" y2="337.6" stroke="#2a2a1a" stroke-width="1.1"/>
<line x1="415.74" y1="346.94" x2="420.55" y2="348.93" stroke="#2a2a1a" stroke-width="1.1"/>
<line x1="410.45" y1="354.85" x2="414.13" y2="358.53" stroke="#2a2a1a" stroke-width="1.1"/>
<circle cx="393.2" cy="338.20000000000005" r="23.6" fill="#f6f6f6"/>
<circle cx="393.2" cy="338.40000000000003" r="22" fill="#e4e4e4"/>
<circle cx="393.2" cy="337.6" r="21.4" fill="#fbfbfb"/>
<circle cx="393.5" cy="337.8" r="19.2" fill="url(#gKnob)"/>
<circle cx="381.6" cy="335.8" r="4" fill="#1fee3a"/>
<text x="384" y="306" font-size="9.8" fill="#1a1a1a" textLength="19" lengthAdjust="spacingAndGlyphs">1500</text>
<text x="356" y="312.5" font-size="9.8" fill="#1a1a1a" textLength="18.8" lengthAdjust="spacingAndGlyphs">1000</text>
<text x="412.8" y="312.5" font-size="9.8" fill="#1a1a1a" textLength="19.2" lengthAdjust="spacingAndGlyphs">2000</text>
<text x="351" y="326.5" font-size="9.8" fill="#1a1a1a" textLength="13.8" lengthAdjust="spacingAndGlyphs">750</text>
<text x="421.8" y="325.7" font-size="9.8" fill="#1a1a1a" textLength="19.6" lengthAdjust="spacingAndGlyphs">2250</text>
<text x="349" y="341.5" font-size="9.8" fill="#1a1a1a" textLength="14" lengthAdjust="spacingAndGlyphs">500</text>
<text x="424" y="341.5" font-size="9.8" fill="#1a1a1a" textLength="19.4" lengthAdjust="spacingAndGlyphs">2500</text>
<text x="350.6" y="356.1" font-size="9.8" fill="#1a1a1a" textLength="14.2" lengthAdjust="spacingAndGlyphs">250</text>
<text x="421.8" y="356.5" font-size="9.8" fill="#1a1a1a" textLength="19.2" lengthAdjust="spacingAndGlyphs">2750</text>
<text x="366.8" y="366.1" font-size="9.8" fill="#1a1a1a" textLength="4.6" lengthAdjust="spacingAndGlyphs">0</text>
<text x="412.8" y="369.5" font-size="9.8" fill="#1a1a1a" textLength="19.2" lengthAdjust="spacingAndGlyphs">3000</text>
<rect x="480.5" y="324.5" width="36.5" height="36.5" fill="#e1e1e1" stroke="#b4b4b4" stroke-width="1" />
<path d="M484.4 342.8 L500.9 328.9 L500.9 335.8 L512.0 335.8 L512.0 349.8 L500.9 349.8 L500.9 356.6 Z" fill="#9a9a9a" opacity="0.35" transform="translate(1.2 1.6)"/>
<path d="M484.4 342.8 L500.9 328.9 L500.9 335.8 L512.0 335.8 L512.0 349.8 L500.9 349.8 L500.9 356.6 Z" fill="url(#gArrow)" stroke="#3f8c0c" stroke-width="1" stroke-linejoin="round"/>
<path d="M487.1 342.9 L499.6 332.4 L499.6 337.4 L510.6 337.4 L510.6 343.6 Z" fill="#b6e07a" opacity="0.55"/>
<rect x="561.5" y="324.5" width="36.5" height="36.5" fill="#e1e1e1" stroke="#b4b4b4" stroke-width="1" />
<path d="M594.0 342.8 L577.5 328.9 L577.5 335.8 L566.5 335.8 L566.5 349.8 L577.5 349.8 L577.5 356.6 Z" fill="#9a9a9a" opacity="0.35" transform="translate(1.2 1.6)"/>
<path d="M594.0 342.8 L577.5 328.9 L577.5 335.8 L566.5 335.8 L566.5 349.8 L577.5 349.8 L577.5 356.6 Z" fill="url(#gArrow)" stroke="#3f8c0c" stroke-width="1" stroke-linejoin="round"/>
<path d="M591.4 342.9 L578.9 332.4 L578.9 337.4 L568.0 337.4 L568.0 343.6 Z" fill="#b6e07a" opacity="0.55"/>
<text x="22" y="416.4" font-size="9.3" fill="#1a1a1a" textLength="72" lengthAdjust="spacingAndGlyphs">Home direction[79]</text>
<text x="166.6" y="420.8" font-size="10.4" fill="#1a1a1a" textLength="107.8" lengthAdjust="spacingAndGlyphs">Home high speed[80]</text>
<rect x="100.5" y="406.5" width="79" height="12.5" fill="#e2e2e2" stroke="#b0b0b0" stroke-width="1" />
<line x1="165.5" y1="407" x2="165.5" y2="418.5" stroke="#a8a8a8" stroke-width="1"/>
<path d="M168.6 410.25 L177 410.25 L172.8 414.85 Z" fill="#111"/>
<text x="105.6" y="416.25" font-size="9.3" fill="#1a1a1a" textLength="30" lengthAdjust="spacingAndGlyphs">Forward</text>
<rect x="285.5" y="406.5" width="39.5" height="18" fill="#ffffff" stroke="#bcbdc2" stroke-width="1" />
<rect x="286" y="407" width="6.5" height="17" fill="#ececec" />
<line x1="286" y1="415.5" x2="292.5" y2="415.5" stroke="#d6d6d6" stroke-width="0.8"/>
<path d="M287.15 412.4 L289.25 409.9 L291.35 412.4 Z M287.15 418.3 L289.25 420.9 L291.35 418.3 Z" fill="#111"/>
<line x1="292.5" y1="407" x2="292.5" y2="424" stroke="#9a9a9a" stroke-width="1"/>
<text x="296" y="419.752" font-size="10.2" fill="#1a1a1a" textLength="12" lengthAdjust="spacingAndGlyphs">60</text>
<text x="186.8" y="444.8" font-size="10.4" fill="#1a1a1a" textLength="70.8" lengthAdjust="spacingAndGlyphs">Home Acc[82]</text>
<rect x="285.5" y="431.5" width="39.5" height="17.5" fill="#ffffff" stroke="#bcbdc2" stroke-width="1" />
<rect x="286" y="432" width="6.5" height="16.5" fill="#ececec" />
<line x1="286" y1="440.25" x2="292.5" y2="440.25" stroke="#d6d6d6" stroke-width="0.8"/>
<path d="M287.15 437.15 L289.25 434.65 L291.35 437.15 Z M287.15 443.05 L289.25 445.65 L291.35 443.05 Z" fill="#111"/>
<line x1="292.5" y1="432" x2="292.5" y2="448.5" stroke="#9a9a9a" stroke-width="1"/>
<text x="296.6" y="444.502" font-size="10.2" fill="#1a1a1a" textLength="18.2" lengthAdjust="spacingAndGlyphs">100</text>
<text x="388.6" y="418.8" font-size="10.4" fill="#1a1a1a" textLength="103.4" lengthAdjust="spacingAndGlyphs">Home low speed[81]</text>
<rect x="496" y="405.5" width="40" height="17.5" fill="#ffffff" stroke="#bcbdc2" stroke-width="1" />
<rect x="496.5" y="406" width="6.5" height="16.5" fill="#ececec" />
<line x1="496.5" y1="414.25" x2="503" y2="414.25" stroke="#d6d6d6" stroke-width="0.8"/>
<path d="M497.65 411.15 L499.75 408.65 L501.85 411.15 Z M497.65 417.05 L499.75 419.65 L501.85 417.05 Z" fill="#111"/>
<line x1="503" y1="406" x2="503" y2="422.5" stroke="#9a9a9a" stroke-width="1"/>
<text x="506.2" y="418.502" font-size="10.2" fill="#1a1a1a" textLength="12.6" lengthAdjust="spacingAndGlyphs">60</text>
<text x="411.6" y="444.8" font-size="10.4" fill="#1a1a1a" textLength="80.4" lengthAdjust="spacingAndGlyphs">Home offset[83]</text>
<rect x="496" y="431.5" width="64" height="17.5" fill="#ffffff" stroke="#bcbdc2" stroke-width="1" />
<rect x="496.5" y="432" width="6.5" height="16.5" fill="#ececec" />
<line x1="496.5" y1="440.25" x2="503" y2="440.25" stroke="#d6d6d6" stroke-width="0.8"/>
<path d="M497.65 437.15 L499.75 434.65 L501.85 437.15 Z M497.65 443.05 L499.75 445.65 L501.85 443.05 Z" fill="#111"/>
<line x1="503" y1="432" x2="503" y2="448.5" stroke="#9a9a9a" stroke-width="1"/>
<text x="506.2" y="444.502" font-size="10.2" fill="#1a1a1a" textLength="19.4" lengthAdjust="spacingAndGlyphs">200</text>
<text x="-11.1" y="471" font-size="10.4" fill="#1a1a1a" textLength="99.5" lengthAdjust="spacingAndGlyphs">Emergency Dec[78]</text>
<rect x="95.5" y="458" width="63.5" height="17.5" fill="#ffffff" stroke="#bcbdc2" stroke-width="1" />
<rect x="96" y="458.5" width="6.5" height="16.5" fill="#ececec" />
<line x1="96" y1="466.75" x2="102.5" y2="466.75" stroke="#d6d6d6" stroke-width="0.8"/>
<path d="M97.15 463.65 L99.25 461.15 L101.35 463.65 Z M97.15 469.55 L99.25 472.15 L101.35 469.55 Z" fill="#111"/>
<line x1="102.5" y1="458.5" x2="102.5" y2="475" stroke="#9a9a9a" stroke-width="1"/>
<text x="105.6" y="471.002" font-size="10.2" fill="#1a1a1a" textLength="18.8" lengthAdjust="spacingAndGlyphs">500</text>
<rect x="3.2" y="462" width="2" height="12" fill="#ffffff" />
</g>
<rect x="3.2" y="485.5" width="634.8" height="76.1" fill="#ffffff" stroke="#b4b4b4" stroke-width="1" />
<line x1="3" y1="485.5" x2="639" y2="485.5" stroke="#9c9c9c" stroke-width="1"/>
<line x1="3.2" y1="485" x2="3.2" y2="562" stroke="#9c9c9c" stroke-width="1"/>
<polygon points="125.1,492.2 134.4,490.0 161.6,492.2 161.6,534.8 152.9,535.7 125.1,533.6" fill="#e9e9ee" stroke="#c9c9d0" stroke-width="0.5"/>
<polygon points="125.1,492.2 147.4,494.4 147.4,535.2 125.1,533.6" fill="#f3f3f6"/>
<polygon points="147.4,494.4 161.6,492.2 161.6,534.8 152.9,535.7 147.4,535.2" fill="#dcdce2"/>
<polygon points="130.7,496.5 138.1,497.4 138.1,499.8 130.7,499.0" fill="#6a6a70"/>
<polygon points="156.5,498.4 158.0,498.1 158.0,517.5 156.5,517.8" fill="#6a6a70"/>
<polygon points="156.5,506.4 158.0,506.1 158.0,514.2 156.5,514.4" fill="#3a62a8"/>
<polygon points="154.9,517.1 159.6,516.5 159.6,530.7 154.9,531.7" fill="#2e2e32"/>
<polygon points="154.2,519.4 155.6,519.1 155.6,529.3 154.2,529.5" fill="#58585c"/>
<polygon points="148.9,499.6 152.1,499.3 152.1,533.0 148.9,533.3" fill="#d0d0d6"/>
<polygon points="149.2,500.8 151.7,500.7 151.7,502.3 149.2,502.4" fill="#a8a8b0"/>
<polygon points="149.2,504.3 151.7,504.2 151.7,505.8 149.2,505.9" fill="#a8a8b0"/>
<polygon points="149.2,507.8 151.7,507.6 151.7,509.2 149.2,509.4" fill="#a8a8b0"/>
<polygon points="149.2,511.2 151.7,511.1 151.7,512.7 149.2,512.8" fill="#a8a8b0"/>
<polygon points="149.2,514.7 151.7,514.6 151.7,516.2 149.2,516.3" fill="#a8a8b0"/>
<polygon points="149.2,518.1 151.7,518.0 151.7,519.6 149.2,519.7" fill="#a8a8b0"/>
<polygon points="149.2,521.6 151.7,521.5 151.7,523.1 149.2,523.2" fill="#a8a8b0"/>
<polygon points="149.2,525.1 151.7,524.9 151.7,526.5 149.2,526.7" fill="#a8a8b0"/>
<polygon points="149.2,528.5 151.7,528.4 151.7,530.0 149.2,530.1" fill="#a8a8b0"/>
<polygon points="120.8,504.3 127.6,501.8 144.9,504.5 144.9,534.8 120.8,535.4" fill="#dedee2" stroke="#bdbdc4" stroke-width="0.5"/>
<polygon points="120.8,504.3 138.1,506.4 138.1,535.4 120.8,535.4" fill="#ececf0"/>
<polygon points="139.3,512.6 144.3,511.7 144.3,519.4 139.3,520.1" fill="#34a844"/>
<polygon points="139.3,523.1 144.3,522.3 144.3,528.6 139.3,529.3" fill="#34a844"/>
<polygon points="140.8,519.6 141.8,519.5 141.8,523.1 140.8,523.2" fill="#3a62a8"/>
<polygon points="109.0,508.9 115.8,507.3 134.4,510.1 134.4,541.6 127.6,542.6 109.0,540.4" fill="#3db54c" stroke="#2c9a3a" stroke-width="0.5"/>
<polygon points="109.0,508.9 127.6,511.3 127.6,542.6 109.0,540.4" fill="url(#gG)"/>
<polygon points="127.6,511.3 134.4,510.1 134.4,541.6 127.6,542.6" fill="#2a8e38"/>
<polygon points="110.9,515.7 126.4,517.6 126.4,518.9 110.9,516.9" fill="#6fd47a" opacity="0.8"/>
<polygon points="129.2,516.9 132.9,516.3 132.9,537.9 129.2,538.7" fill="#1f7a2c"/>
<polygon points="110.9,521.8 126.0,523.7 126.0,524.7 110.9,522.8" fill="#ffffff" opacity="0.28"/>
<polygon points="110.9,525.3 126.0,527.2 126.0,528.2 110.9,526.3" fill="#ffffff" opacity="0.28"/>
<polygon points="110.9,528.8 126.0,530.6 126.0,531.6 110.9,529.8" fill="#ffffff" opacity="0.28"/>
<polygon points="110.9,532.2 126.0,534.1 126.0,535.1 110.9,533.2" fill="#ffffff" opacity="0.28"/>
<polygon points="110.9,535.7 126.0,537.5 126.0,538.5 110.9,536.7" fill="#ffffff" opacity="0.28"/>
<polygon points="117.1,510.7 126.0,512.0 126.0,513.4 117.1,512.2" fill="#1f8a30" opacity="0.8"/>
<polygon points="104.1,520.0 109.0,518.4 121.4,520.6 121.4,544.1 117.1,545.3 104.1,543.1" fill="#e2e2e6" stroke="#bdbdc4" stroke-width="0.5"/>
<polygon points="104.1,520.0 117.1,522.1 117.1,545.3 104.1,543.1" fill="#f0f0f3"/>
<polygon points="117.7,524.9 121.4,524.3 121.4,533.0 117.7,533.7" fill="#34a844"/>
<polygon points="117.7,536.7 121.4,535.9 121.4,543.1 117.7,543.8" fill="#34a844"/>
<polygon points="118.6,533.7 119.8,533.6 119.8,536.4 118.6,536.6" fill="#3a62a8"/>
<polygon points="94.8,523.7 99.8,522.1 111.5,524.3 111.5,546.6 107.8,547.8 94.8,545.6" fill="#3db54c" stroke="#2c9a3a" stroke-width="0.5"/>
<polygon points="94.8,523.7 107.8,525.8 107.8,547.8 94.8,545.6" fill="url(#gG)"/>
<polygon points="107.8,525.8 111.5,524.3 111.5,546.6 107.8,547.8" fill="#2a8e38"/>
<polygon points="96.7,528.6 106.0,530.1 106.0,531.2 96.7,529.8" fill="#78d884" opacity="0.8"/>
<polygon points="96.3,533.0 106.5,534.6 106.5,535.6 96.3,534.0" fill="#ffffff" opacity="0.28"/>
<polygon points="96.3,536.2 106.5,537.8 106.5,538.8 96.3,537.2" fill="#ffffff" opacity="0.28"/>
<polygon points="96.3,539.4 106.5,541.0 106.5,542.0 96.3,540.4" fill="#ffffff" opacity="0.28"/>
<polygon points="96.3,542.6 106.5,544.2 106.5,545.2 96.3,543.6" fill="#ffffff" opacity="0.28"/>
<polygon points="86.2,531.1 90.5,529.5 99.8,531.5 99.8,549.0 97.1,550.3 86.2,548.4" fill="#dcdce0" stroke="#b4b4bc" stroke-width="0.5"/>
<polygon points="86.2,531.1 97.1,533.0 97.1,550.3 86.2,548.4" fill="#ececf0"/>
<polygon points="97.3,534.8 99.8,534.3 99.8,547.8 97.3,548.4" fill="#34a844"/>
<polygon points="87.7,534.8 95.6,536.2 95.6,547.8 87.7,546.4" fill="#d2d2d8"/>
<polygon points="134.4,534.8 144.3,533.0 148.2,535.4 148.2,544.1 141.8,547.8 134.4,544.1" fill="url(#gMot)"/>
<polygon points="130.7,538.5 139.1,536.4 141.8,538.9 141.8,547.8 133.4,548.4 130.7,546.3" fill="#c9c9cc" stroke="#8a8a90" stroke-width="0.5"/>
<circle cx="136.2" cy="542.9" r="2.6" fill="#e8e8ea" stroke="#77777c" stroke-width="0.5"/>
<polygon points="130.1,544.1 136.2,542.2 136.9,543.5 130.7,545.3" fill="#9a9aa0"/>
<polygon points="147.7,541.6 156.6,539.4 160.3,541.9 160.3,549.3 154.2,552.1 147.7,549.7" fill="url(#gMot)"/>
<polygon points="144.9,544.7 152.3,542.9 154.5,545.1 154.5,552.1 147.4,552.5 144.9,550.3" fill="#1c1c1e" stroke="#3a3a3c" stroke-width="0.5"/>
<circle cx="149.5" cy="547.8" r="2.3" fill="#77777a" stroke="#bbbbbf" stroke-width="0.5"/>
<polygon points="144.5,548.8 149.5,547.2 150.0,548.2 145.0,549.9" fill="#8a8a90"/>
<path d="M514.7 497.6 L521.8 497.6 L521.8 512.3 C521.8 519.3 519.4 523.4 514.7 524.6 L514.7 525.4 L507.7 525.4 L507.7 518.1 A7.03 7.03 0 0 0 514.7 511.1 Z" fill="#a9d02b"/>
<circle cx="507.7" cy="511.1" r="3.6" fill="#a9d02b"/>
<path d="M507.5 504.1 A7.03 7.03 0 0 0 500.7 511.1 L500.7 525.4" fill="none" stroke="#c3e070" stroke-width="0.9"/>
<path d="M507.5 502.3 A8.79 8.79 0 0 0 498.9 511.1 L498.9 525.4" fill="none" stroke="#c3e070" stroke-width="0.9"/>
<path d="M507.5 500.6 A10.55 10.55 0 0 0 497.1 511.1 L497.1 525.4" fill="none" stroke="#c3e070" stroke-width="0.9"/>
<path d="M507.5 498.8 A12.31 12.31 0 0 0 495.4 511.1 L495.4 525.4" fill="none" stroke="#c3e070" stroke-width="0.9"/>
<path d="M507.5 497.0 A14.07 14.07 0 0 0 493.6 511.1 L493.6 525.4" fill="none" stroke="#c3e070" stroke-width="0.9"/>
<text x="525.4" y="515.2" font-size="9.8" fill="url(#gRt)" stroke="url(#gRt)" stroke-width="0.25" textLength="73.6" lengthAdjust="spacingAndGlyphs">RTELLIGENT</text>
<text x="219" y="528.6" font-size="18.8" fill="#111" textLength="210.6" lengthAdjust="spacingAndGlyphs">Stepper &amp; Servo solutions</text>
<text x="508" y="546.6" font-size="9.6" fill="#333" textLength="83.2" lengthAdjust="spacingAndGlyphs">www.szruitech.com</text>
<rect x="658.3" y="43.5" width="369.7" height="258.5" fill="#cdcdd2" />
<rect x="659.2" y="44.5" width="364" height="256.5" fill="#ffffff" />
<rect x="660.8" y="46.1" width="361" height="253.5" fill="#7a7a7a" />
<rect x="660.8" y="46.1" width="360.3" height="252.8" fill="#f0f0f0" />
<rect x="660.8" y="46.1" width="350" height="242.5" fill="#000000" />
<rect x="1010.8" y="288.6" width="10.3" height="10.3" fill="#000000" />
<rect x="660.3" y="288.6" width="1" height="11" fill="#5a5a5a" />
<path d="M1013.6 52.8 L1016.3 50 L1019 52.8" stroke="#c4c4c4" stroke-width="0.9" fill="none"/>
<path d="M1013.2 282.6 L1015.7 285.2 L1018.2 282.6" stroke="#bdbdbd" stroke-width="1" fill="none"/>
<path d="M667 291 L664.4 293.7 L667 296.4" stroke="#c4c4c4" stroke-width="0.9" fill="none"/>
<path d="M1004.6 291.4 L1007.2 293.9 L1004.6 296.4" stroke="#bdbdbd" stroke-width="1" fill="none"/>
<text x="661.4" y="55.8" font-size="9.8" fill="#00e000" textLength="125.6" lengthAdjust="spacingAndGlyphs">Welcome to use NTConfigurator!</text>
<rect x="661.5" y="300.5" width="37" height="35.5" fill="#dadada" stroke="#c2c2c2" stroke-width="1" />
<rect x="700.6" y="298.6" width="40" height="39.8" fill="#e2e2e2" />
<rect x="700.8" y="298.8" width="39.6" height="39.4" fill="none" stroke="#3c3c3c" stroke-width="0.85" stroke-dasharray="1.3 1.3"/>
<rect x="664.2" y="300.7" width="33" height="33.4" fill="#6e90c4" rx="4.6" />
<rect x="665.3" y="301.8" width="30.8" height="31.2" fill="#f2f6fb" rx="3.8" />
<rect x="666.5" y="303" width="28.4" height="28.8" fill="url(#gBlue)" rx="2.8" />
<rect x="666.5" y="303" width="28.4" height="28.8" fill="url(#gBlue2)" rx="2.8" />
<text x="669" y="326.5" font-size="24.6" fill="#f4f4dc" style="font-family:'Liberation Serif', serif" textLength="22" lengthAdjust="spacingAndGlyphs">03</text>
<rect x="704.2" y="300.4" width="32.6" height="33.4" fill="#6e90c4" rx="4.6" />
<rect x="705.3" y="301.5" width="30.4" height="31.2" fill="#f2f6fb" rx="3.8" />
<rect x="706.5" y="302.7" width="28" height="28.8" fill="url(#gBlue)" rx="2.8" />
<rect x="706.5" y="302.7" width="28" height="28.8" fill="url(#gBlue2)" rx="2.8" />
<text x="708.6" y="326.5" font-size="24.6" fill="#f4f4dc" style="font-family:'Liberation Serif', serif" textLength="22.4" lengthAdjust="spacingAndGlyphs">06</text>
<rect x="979.5" y="308" width="38" height="16.5" fill="#e1e1e1" stroke="#b2b2b2" stroke-width="1" />
<text x="987.2" y="318.8" font-size="9.4" fill="#1a1a1a" textLength="20" lengthAdjust="spacingAndGlyphs">Clear</text>
<rect x="658.5" y="366.5" width="359" height="188" fill="#ffffff" stroke="#dcdcdc" stroke-width="1" />
<rect x="690.5" y="351.8" width="39" height="14.7" fill="#f1f1f1" stroke="#dfdfdf" stroke-width="1" />
<rect x="658.5" y="350.5" width="32" height="17.5" fill="#ffffff" stroke="#dcdcdc" stroke-width="1" />
<rect x="659" y="366" width="31" height="3" fill="#ffffff" />
<text x="667" y="362" font-size="9.3" fill="#111" textLength="12.6" lengthAdjust="spacingAndGlyphs">I/O</text>
<text x="696.2" y="362.8" font-size="9.3" fill="#5a5a5a" textLength="24" lengthAdjust="spacingAndGlyphs">Status</text>
<g clip-path="url(#cpIO)">
<circle cx="677" cy="381" r="8.1" fill="#eeeeee"/>
<circle cx="677" cy="381" r="7.5" fill="#d6d6d6"/>
<circle cx="677" cy="381" r="6.8" fill="#b2b2b2"/>
<circle cx="677" cy="381" r="6.2" fill="#8e8e8e"/>
<polygon points="682.36,383.22 679.22,386.36 674.78,386.36 671.64,383.22 671.64,378.78 674.78,375.64 679.22,375.64 682.36,378.78" fill="url(#gLedG)" stroke-linejoin="round" stroke="#1fd012" stroke-width="0.6"/>
<text x="687.6" y="384.4" font-size="9.3" fill="#1a1a1a" textLength="61.4" lengthAdjust="spacingAndGlyphs">= Conduction(C)</text>
<circle cx="779" cy="381" r="8.1" fill="#eeeeee"/>
<circle cx="779" cy="381" r="7.5" fill="#d6d6d6"/>
<circle cx="779" cy="381" r="6.8" fill="#b2b2b2"/>
<circle cx="779" cy="381" r="6.2" fill="#8e8e8e"/>
<polygon points="784.36,383.22 781.22,386.36 776.78,386.36 773.64,383.22 773.64,378.78 776.78,375.64 781.22,375.64 784.36,378.78" fill="url(#gLed)" stroke-linejoin="round" stroke="#0a0a0a" stroke-width="0.6"/>
<text x="789" y="384.4" font-size="9.3" fill="#1a1a1a" textLength="76" lengthAdjust="spacingAndGlyphs">= Non-conducting(C</text>
<rect x="865.5" y="375.5" width="10" height="10" fill="#ffffff" stroke="#4a4a4a" stroke-width="0.9" />
<text x="879" y="383.4" font-size="9.3" fill="#1a1a1a" textLength="61.2" lengthAdjust="spacingAndGlyphs">Dynamic update</text>
<g clip-path="url(#cpS1)">
<text x="675" y="404.5" font-size="10" font-weight="bold" fill="#111" textLength="50.5" lengthAdjust="spacingAndGlyphs">INx status</text>
</g><g clip-path="url(#cpS2)">
<text x="724" y="402.9" font-size="10" font-weight="bold" fill="#111" textLength="92.6" lengthAdjust="spacingAndGlyphs">INx turn-on trigger</text>
</g>
<text x="809" y="401.6" font-size="10" font-weight="bold" fill="#111" textLength="93.2" lengthAdjust="spacingAndGlyphs">INx turn-off trigger</text>
<text x="910" y="403.6" font-size="10" font-weight="bold" fill="#111" textLength="34" lengthAdjust="spacingAndGlyphs">Output</text>
<text x="676.2" y="418.4" font-size="9.3" fill="#1a1a1a" textLength="13.8" lengthAdjust="spacingAndGlyphs">IN1</text>
<circle cx="702" cy="415" r="8.1" fill="#eeeeee"/>
<circle cx="702" cy="415" r="7.5" fill="#d6d6d6"/>
<circle cx="702" cy="415" r="6.8" fill="#b2b2b2"/>
<circle cx="702" cy="415" r="6.2" fill="#8e8e8e"/>
<polygon points="707.36,417.22 704.22,420.36 699.78,420.36 696.64,417.22 696.64,412.78 699.78,409.64 704.22,409.64 707.36,412.78" fill="url(#gLed)" stroke-linejoin="round" stroke="#0a0a0a" stroke-width="0.6"/>
<text x="726.8" y="418.4" font-size="9.3" fill="#1a1a1a" textLength="13.8" lengthAdjust="spacingAndGlyphs">IN1</text>
<circle cx="754.2" cy="415" r="8.1" fill="#eeeeee"/>
<circle cx="754.2" cy="415" r="7.5" fill="#d6d6d6"/>
<circle cx="754.2" cy="415" r="6.8" fill="#b2b2b2"/>
<circle cx="754.2" cy="415" r="6.2" fill="#8e8e8e"/>
<polygon points="759.56,417.22 756.42,420.36 751.98,420.36 748.84,417.22 748.84,412.78 751.98,409.64 756.42,409.64 759.56,412.78" fill="url(#gLed)" stroke-linejoin="round" stroke="#0a0a0a" stroke-width="0.6"/>
<rect x="767.5" y="408.5" width="25.5" height="16.8" fill="#e1e1e1" stroke="#b2b2b2" stroke-width="1" />
<text x="770" y="419.8" font-size="9.4" fill="#1a1a1a" textLength="19.6" lengthAdjust="spacingAndGlyphs">Clear</text>
<text x="812" y="417.4" font-size="9.3" fill="#1a1a1a" textLength="13.8" lengthAdjust="spacingAndGlyphs">IN1</text>
<circle cx="839.2" cy="414" r="8.1" fill="#eeeeee"/>
<circle cx="839.2" cy="414" r="7.5" fill="#d6d6d6"/>
<circle cx="839.2" cy="414" r="6.8" fill="#b2b2b2"/>
<circle cx="839.2" cy="414" r="6.2" fill="#8e8e8e"/>
<polygon points="844.56,416.22 841.42,419.36 836.98,419.36 833.84,416.22 833.84,411.78 836.98,408.64 841.42,408.64 844.56,411.78" fill="url(#gLed)" stroke-linejoin="round" stroke="#0a0a0a" stroke-width="0.6"/>
<rect x="852.5" y="407.3" width="25.5" height="16.8" fill="#e1e1e1" stroke="#b2b2b2" stroke-width="1" />
<text x="855" y="418.9" font-size="9.4" fill="#1a1a1a" textLength="19.6" lengthAdjust="spacingAndGlyphs">Clear</text>
<text x="676.2" y="436.4" font-size="9.3" fill="#1a1a1a" textLength="13.8" lengthAdjust="spacingAndGlyphs">IN2</text>
<circle cx="702" cy="433" r="8.1" fill="#eeeeee"/>
<circle cx="702" cy="433" r="7.5" fill="#d6d6d6"/>
<circle cx="702" cy="433" r="6.8" fill="#b2b2b2"/>
<circle cx="702" cy="433" r="6.2" fill="#8e8e8e"/>
<polygon points="707.36,435.22 704.22,438.36 699.78,438.36 696.64,435.22 696.64,430.78 699.78,427.64 704.22,427.64 707.36,430.78" fill="url(#gLed)" stroke-linejoin="round" stroke="#0a0a0a" stroke-width="0.6"/>
<text x="726.8" y="436.4" font-size="9.3" fill="#1a1a1a" textLength="13.8" lengthAdjust="spacingAndGlyphs">IN2</text>
<circle cx="754.2" cy="433" r="8.1" fill="#eeeeee"/>
<circle cx="754.2" cy="433" r="7.5" fill="#d6d6d6"/>
<circle cx="754.2" cy="433" r="6.8" fill="#b2b2b2"/>
<circle cx="754.2" cy="433" r="6.2" fill="#8e8e8e"/>
<polygon points="759.56,435.22 756.42,438.36 751.98,438.36 748.84,435.22 748.84,430.78 751.98,427.64 756.42,427.64 759.56,430.78" fill="url(#gLed)" stroke-linejoin="round" stroke="#0a0a0a" stroke-width="0.6"/>
<rect x="767.5" y="426.25" width="25.5" height="16.8" fill="#e1e1e1" stroke="#b2b2b2" stroke-width="1" />
<text x="770" y="437.8" font-size="9.4" fill="#1a1a1a" textLength="19.6" lengthAdjust="spacingAndGlyphs">Clear</text>
<text x="812" y="435" font-size="9.3" fill="#1a1a1a" textLength="13.8" lengthAdjust="spacingAndGlyphs">IN2</text>
<circle cx="839.2" cy="431.6" r="8.1" fill="#eeeeee"/>
<circle cx="839.2" cy="431.6" r="7.5" fill="#d6d6d6"/>
<circle cx="839.2" cy="431.6" r="6.8" fill="#b2b2b2"/>
<circle cx="839.2" cy="431.6" r="6.2" fill="#8e8e8e"/>
<polygon points="844.56,433.82 841.42,436.96 836.98,436.96 833.84,433.82 833.84,429.38 836.98,426.24 841.42,426.24 844.56,429.38" fill="url(#gLed)" stroke-linejoin="round" stroke="#0a0a0a" stroke-width="0.6"/>
<rect x="852.5" y="425" width="25.5" height="16.8" fill="#e1e1e1" stroke="#b2b2b2" stroke-width="1" />
<text x="855" y="436.5" font-size="9.4" fill="#1a1a1a" textLength="19.6" lengthAdjust="spacingAndGlyphs">Clear</text>
<text x="676.2" y="454.4" font-size="9.3" fill="#1a1a1a" textLength="13.8" lengthAdjust="spacingAndGlyphs">IN3</text>
<circle cx="702" cy="451" r="8.1" fill="#eeeeee"/>
<circle cx="702" cy="451" r="7.5" fill="#d6d6d6"/>
<circle cx="702" cy="451" r="6.8" fill="#b2b2b2"/>
<circle cx="702" cy="451" r="6.2" fill="#8e8e8e"/>
<polygon points="707.36,453.22 704.22,456.36 699.78,456.36 696.64,453.22 696.64,448.78 699.78,445.64 704.22,445.64 707.36,448.78" fill="url(#gLed)" stroke-linejoin="round" stroke="#0a0a0a" stroke-width="0.6"/>
<text x="726.8" y="454.4" font-size="9.3" fill="#1a1a1a" textLength="13.8" lengthAdjust="spacingAndGlyphs">IN3</text>
<circle cx="754.2" cy="451" r="8.1" fill="#eeeeee"/>
<circle cx="754.2" cy="451" r="7.5" fill="#d6d6d6"/>
<circle cx="754.2" cy="451" r="6.8" fill="#b2b2b2"/>
<circle cx="754.2" cy="451" r="6.2" fill="#8e8e8e"/>
<polygon points="759.56,453.22 756.42,456.36 751.98,456.36 748.84,453.22 748.84,448.78 751.98,445.64 756.42,445.64 759.56,448.78" fill="url(#gLed)" stroke-linejoin="round" stroke="#0a0a0a" stroke-width="0.6"/>
<rect x="767.5" y="444" width="25.5" height="16.8" fill="#e1e1e1" stroke="#b2b2b2" stroke-width="1" />
<text x="770" y="455.8" font-size="9.4" fill="#1a1a1a" textLength="19.6" lengthAdjust="spacingAndGlyphs">Clear</text>
<text x="812" y="452.6" font-size="9.3" fill="#1a1a1a" textLength="13.8" lengthAdjust="spacingAndGlyphs">IN3</text>
<circle cx="839.2" cy="449.2" r="8.1" fill="#eeeeee"/>
<circle cx="839.2" cy="449.2" r="7.5" fill="#d6d6d6"/>
<circle cx="839.2" cy="449.2" r="6.8" fill="#b2b2b2"/>
<circle cx="839.2" cy="449.2" r="6.2" fill="#8e8e8e"/>
<polygon points="844.56,451.42 841.42,454.56 836.98,454.56 833.84,451.42 833.84,446.98 836.98,443.84 841.42,443.84 844.56,446.98" fill="url(#gLed)" stroke-linejoin="round" stroke="#0a0a0a" stroke-width="0.6"/>
<rect x="852.5" y="442.7" width="25.5" height="16.8" fill="#e1e1e1" stroke="#b2b2b2" stroke-width="1" />
<text x="855" y="454.1" font-size="9.4" fill="#1a1a1a" textLength="19.6" lengthAdjust="spacingAndGlyphs">Clear</text>
<text x="676.2" y="472" font-size="9.3" fill="#1a1a1a" textLength="13.8" lengthAdjust="spacingAndGlyphs">IN4</text>
<circle cx="702" cy="468.6" r="8.1" fill="#eeeeee"/>
<circle cx="702" cy="468.6" r="7.5" fill="#d6d6d6"/>
<circle cx="702" cy="468.6" r="6.8" fill="#b2b2b2"/>
<circle cx="702" cy="468.6" r="6.2" fill="#8e8e8e"/>
<polygon points="707.36,470.82 704.22,473.96 699.78,473.96 696.64,470.82 696.64,466.38 699.78,463.24 704.22,463.24 707.36,466.38" fill="url(#gLed)" stroke-linejoin="round" stroke="#0a0a0a" stroke-width="0.6"/>
<text x="726.8" y="472" font-size="9.3" fill="#1a1a1a" textLength="13.8" lengthAdjust="spacingAndGlyphs">IN4</text>
<circle cx="754.2" cy="468.6" r="8.1" fill="#eeeeee"/>
<circle cx="754.2" cy="468.6" r="7.5" fill="#d6d6d6"/>
<circle cx="754.2" cy="468.6" r="6.8" fill="#b2b2b2"/>
<circle cx="754.2" cy="468.6" r="6.2" fill="#8e8e8e"/>
<polygon points="759.56,470.82 756.42,473.96 751.98,473.96 748.84,470.82 748.84,466.38 751.98,463.24 756.42,463.24 759.56,466.38" fill="url(#gLed)" stroke-linejoin="round" stroke="#0a0a0a" stroke-width="0.6"/>
<rect x="767.5" y="461.75" width="25.5" height="16.8" fill="#e1e1e1" stroke="#b2b2b2" stroke-width="1" />
<text x="770" y="473.4" font-size="9.4" fill="#1a1a1a" textLength="19.6" lengthAdjust="spacingAndGlyphs">Clear</text>
<text x="812" y="470.4" font-size="9.3" fill="#1a1a1a" textLength="13.8" lengthAdjust="spacingAndGlyphs">IN4</text>
<circle cx="839.2" cy="467" r="8.1" fill="#eeeeee"/>
<circle cx="839.2" cy="467" r="7.5" fill="#d6d6d6"/>
<circle cx="839.2" cy="467" r="6.8" fill="#b2b2b2"/>
<circle cx="839.2" cy="467" r="6.2" fill="#8e8e8e"/>
<polygon points="844.56,469.22 841.42,472.36 836.98,472.36 833.84,469.22 833.84,464.78 836.98,461.64 841.42,461.64 844.56,464.78" fill="url(#gLed)" stroke-linejoin="round" stroke="#0a0a0a" stroke-width="0.6"/>
<rect x="852.5" y="460.4" width="25.5" height="16.8" fill="#e1e1e1" stroke="#b2b2b2" stroke-width="1" />
<text x="855" y="471.9" font-size="9.4" fill="#1a1a1a" textLength="19.6" lengthAdjust="spacingAndGlyphs">Clear</text>
<text x="676.2" y="489.8" font-size="9.3" fill="#1a1a1a" textLength="13.8" lengthAdjust="spacingAndGlyphs">IN5</text>
<circle cx="702" cy="486.4" r="8.1" fill="#eeeeee"/>
<circle cx="702" cy="486.4" r="7.5" fill="#d6d6d6"/>
<circle cx="702" cy="486.4" r="6.8" fill="#b2b2b2"/>
<circle cx="702" cy="486.4" r="6.2" fill="#8e8e8e"/>
<polygon points="707.36,488.62 704.22,491.76 699.78,491.76 696.64,488.62 696.64,484.18 699.78,481.04 704.22,481.04 707.36,484.18" fill="url(#gLed)" stroke-linejoin="round" stroke="#0a0a0a" stroke-width="0.6"/>
<text x="726.8" y="489.8" font-size="9.3" fill="#1a1a1a" textLength="13.8" lengthAdjust="spacingAndGlyphs">IN5</text>
<circle cx="754.2" cy="486.4" r="8.1" fill="#eeeeee"/>
<circle cx="754.2" cy="486.4" r="7.5" fill="#d6d6d6"/>
<circle cx="754.2" cy="486.4" r="6.8" fill="#b2b2b2"/>
<circle cx="754.2" cy="486.4" r="6.2" fill="#8e8e8e"/>
<polygon points="759.56,488.62 756.42,491.76 751.98,491.76 748.84,488.62 748.84,484.18 751.98,481.04 756.42,481.04 759.56,484.18" fill="url(#gLed)" stroke-linejoin="round" stroke="#0a0a0a" stroke-width="0.6"/>
<rect x="767.5" y="479.5" width="25.5" height="16.8" fill="#e1e1e1" stroke="#b2b2b2" stroke-width="1" />
<text x="770" y="491.2" font-size="9.4" fill="#1a1a1a" textLength="19.6" lengthAdjust="spacingAndGlyphs">Clear</text>
<text x="812" y="487.8" font-size="9.3" fill="#1a1a1a" textLength="13.8" lengthAdjust="spacingAndGlyphs">IN5</text>
<circle cx="839.2" cy="484.4" r="8.1" fill="#eeeeee"/>
<circle cx="839.2" cy="484.4" r="7.5" fill="#d6d6d6"/>
<circle cx="839.2" cy="484.4" r="6.8" fill="#b2b2b2"/>
<circle cx="839.2" cy="484.4" r="6.2" fill="#8e8e8e"/>
<polygon points="844.56,486.62 841.42,489.76 836.98,489.76 833.84,486.62 833.84,482.18 836.98,479.04 841.42,479.04 844.56,482.18" fill="url(#gLed)" stroke-linejoin="round" stroke="#0a0a0a" stroke-width="0.6"/>
<rect x="852.5" y="478.1" width="25.5" height="16.8" fill="#e1e1e1" stroke="#b2b2b2" stroke-width="1" />
<text x="855" y="489.3" font-size="9.4" fill="#1a1a1a" textLength="19.6" lengthAdjust="spacingAndGlyphs">Clear</text>
<text x="676.2" y="507.6" font-size="9.3" fill="#1a1a1a" textLength="13.8" lengthAdjust="spacingAndGlyphs">IN6</text>
<circle cx="702" cy="504.2" r="8.1" fill="#eeeeee"/>
<circle cx="702" cy="504.2" r="7.5" fill="#d6d6d6"/>
<circle cx="702" cy="504.2" r="6.8" fill="#b2b2b2"/>
<circle cx="702" cy="504.2" r="6.2" fill="#8e8e8e"/>
<polygon points="707.36,506.42 704.22,509.56 699.78,509.56 696.64,506.42 696.64,501.98 699.78,498.84 704.22,498.84 707.36,501.98" fill="url(#gLed)" stroke-linejoin="round" stroke="#0a0a0a" stroke-width="0.6"/>
<text x="726.8" y="507.6" font-size="9.3" fill="#1a1a1a" textLength="13.8" lengthAdjust="spacingAndGlyphs">IN6</text>
<circle cx="754.2" cy="504.2" r="8.1" fill="#eeeeee"/>
<circle cx="754.2" cy="504.2" r="7.5" fill="#d6d6d6"/>
<circle cx="754.2" cy="504.2" r="6.8" fill="#b2b2b2"/>
<circle cx="754.2" cy="504.2" r="6.2" fill="#8e8e8e"/>
<polygon points="759.56,506.42 756.42,509.56 751.98,509.56 748.84,506.42 748.84,501.98 751.98,498.84 756.42,498.84 759.56,501.98" fill="url(#gLed)" stroke-linejoin="round" stroke="#0a0a0a" stroke-width="0.6"/>
<rect x="767.5" y="497.25" width="25.5" height="16.8" fill="#e1e1e1" stroke="#b2b2b2" stroke-width="1" />
<text x="770" y="509" font-size="9.4" fill="#1a1a1a" textLength="19.6" lengthAdjust="spacingAndGlyphs">Clear</text>
<text x="812" y="505.8" font-size="9.3" fill="#1a1a1a" textLength="13.8" lengthAdjust="spacingAndGlyphs">IN6</text>
<circle cx="839.2" cy="502.4" r="8.1" fill="#eeeeee"/>
<circle cx="839.2" cy="502.4" r="7.5" fill="#d6d6d6"/>
<circle cx="839.2" cy="502.4" r="6.8" fill="#b2b2b2"/>
<circle cx="839.2" cy="502.4" r="6.2" fill="#8e8e8e"/>
<polygon points="844.56,504.62 841.42,507.76 836.98,507.76 833.84,504.62 833.84,500.18 836.98,497.04 841.42,497.04 844.56,500.18" fill="url(#gLed)" stroke-linejoin="round" stroke="#0a0a0a" stroke-width="0.6"/>
<rect x="852.5" y="495.8" width="25.5" height="16.8" fill="#e1e1e1" stroke="#b2b2b2" stroke-width="1" />
<text x="855" y="507.3" font-size="9.4" fill="#1a1a1a" textLength="19.6" lengthAdjust="spacingAndGlyphs">Clear</text>
<text x="903.8" y="428.4" font-size="9.3" fill="#1a1a1a" textLength="23.2" lengthAdjust="spacingAndGlyphs">OUT1</text>
<circle cx="940.4" cy="425" r="8.1" fill="#eeeeee"/>
<circle cx="940.4" cy="425" r="7.5" fill="#d6d6d6"/>
<circle cx="940.4" cy="425" r="6.8" fill="#b2b2b2"/>
<circle cx="940.4" cy="425" r="6.2" fill="#8e8e8e"/>
<polygon points="945.76,427.22 942.62,430.36 938.18,430.36 935.04,427.22 935.04,422.78 938.18,419.64 942.62,419.64 945.76,422.78" fill="url(#gLed)" stroke-linejoin="round" stroke="#0a0a0a" stroke-width="0.6"/>
<text x="903.8" y="451.4" font-size="9.3" fill="#1a1a1a" textLength="23.2" lengthAdjust="spacingAndGlyphs">OUT2</text>
<circle cx="940.4" cy="448" r="8.1" fill="#eeeeee"/>
<circle cx="940.4" cy="448" r="7.5" fill="#d6d6d6"/>
<circle cx="940.4" cy="448" r="6.8" fill="#b2b2b2"/>
<circle cx="940.4" cy="448" r="6.2" fill="#8e8e8e"/>
<polygon points="945.76,450.22 942.62,453.36 938.18,453.36 935.04,450.22 935.04,445.78 938.18,442.64 942.62,442.64 945.76,445.78" fill="url(#gLed)" stroke-linejoin="round" stroke="#0a0a0a" stroke-width="0.6"/>
<text x="903.8" y="477.8" font-size="9.3" fill="#1a1a1a" textLength="23.2" lengthAdjust="spacingAndGlyphs">OUT3</text>
<circle cx="940.4" cy="474.4" r="8.1" fill="#eeeeee"/>
<circle cx="940.4" cy="474.4" r="7.5" fill="#d6d6d6"/>
<circle cx="940.4" cy="474.4" r="6.8" fill="#b2b2b2"/>
<circle cx="940.4" cy="474.4" r="6.2" fill="#8e8e8e"/>
<polygon points="945.76,476.62 942.62,479.76 938.18,479.76 935.04,476.62 935.04,472.18 938.18,469.04 942.62,469.04 945.76,472.18" fill="url(#gLed)" stroke-linejoin="round" stroke="#0a0a0a" stroke-width="0.6"/>
<text x="903.8" y="500.8" font-size="9.3" fill="#1a1a1a" textLength="23.2" lengthAdjust="spacingAndGlyphs">OUT4</text>
<circle cx="940.4" cy="497.4" r="8.1" fill="#eeeeee"/>
<circle cx="940.4" cy="497.4" r="7.5" fill="#d6d6d6"/>
<circle cx="940.4" cy="497.4" r="6.8" fill="#b2b2b2"/>
<circle cx="940.4" cy="497.4" r="6.2" fill="#8e8e8e"/>
<polygon points="945.76,499.62 942.62,502.76 938.18,502.76 935.04,499.62 935.04,495.18 938.18,492.04 942.62,492.04 945.76,495.18" fill="url(#gLed)" stroke-linejoin="round" stroke="#0a0a0a" stroke-width="0.6"/>
</g>
</svg>
</body></html>
